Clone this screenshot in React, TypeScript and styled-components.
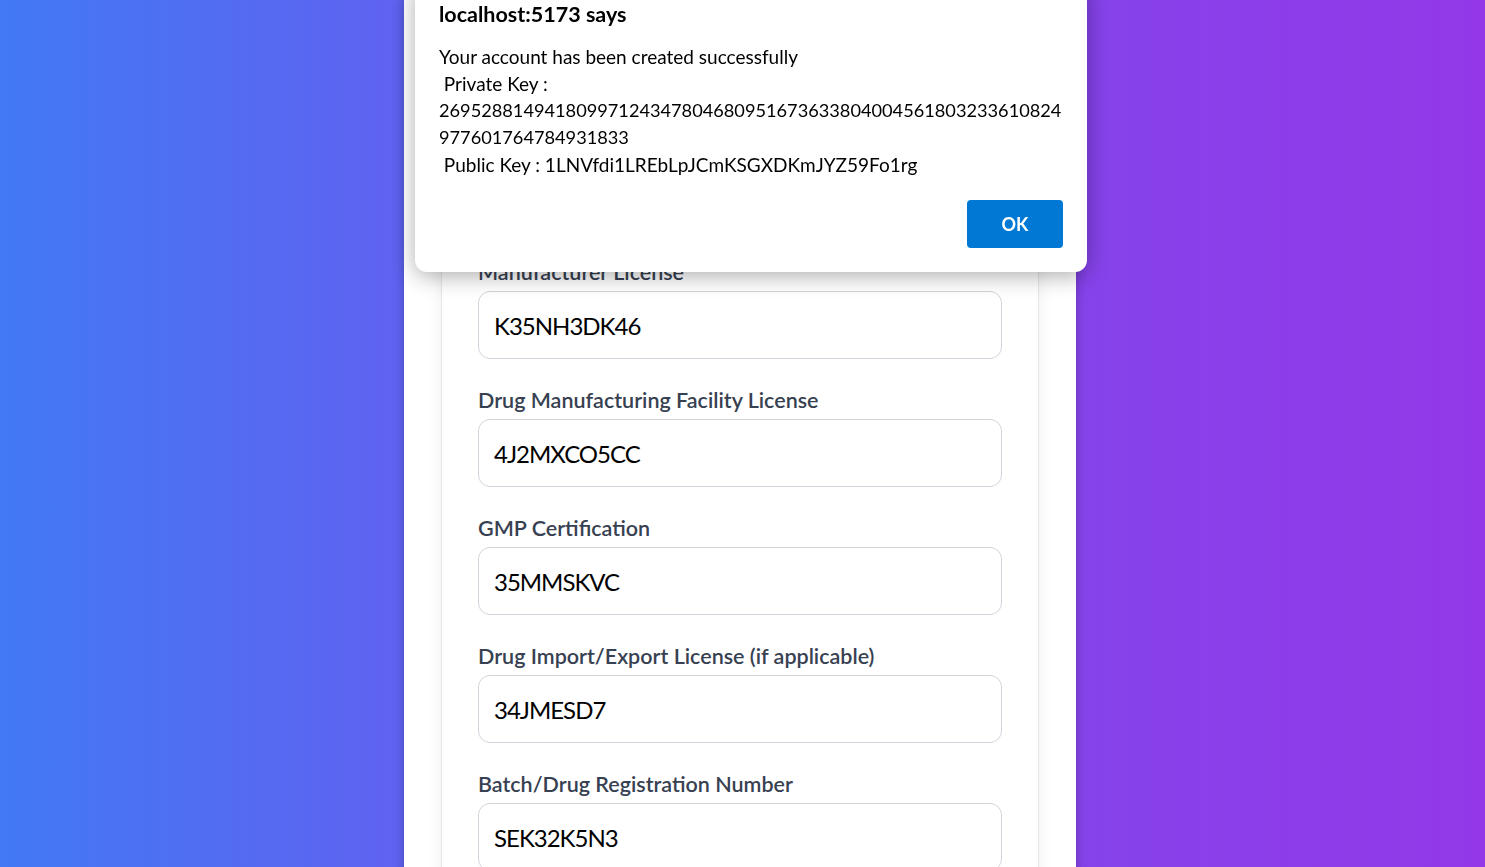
import React from "react";
import styled, { createGlobalStyle } from "styled-components";

const GlobalStyle = createGlobalStyle`
  html, body {
    margin: 0;
    padding: 0;
    height: 100%;
    overflow: hidden;
  }
  body {
    font-family: "Lato", "Noto Sans", "Liberation Sans", sans-serif;
  }
`;

const Page = styled.div`
  min-height: 100vh;
  display: flex;
  justify-content: center;
  padding-right: 5px;
  background: linear-gradient(90deg, #4279f4 0%, #7d4aec 55%, #9338e8 100%);
`;

const Panel = styled.div`
  width: 672px;
  min-height: 100vh;
  box-sizing: border-box;
  padding: 0 37px;
  background: #ffffff;
  box-shadow: 0 0 10px rgba(0, 0, 0, 0.25);
`;

const Card = styled.form`
  display: flex;
  flex-direction: column;
  gap: 24px;
  padding: 255px 36px 40px;
  border: 1px solid #e5e7eb;
  border-top: none;
  background: #ffffff;
  box-shadow: 0 4px 14px rgba(0, 0, 0, 0.07);
`;

const Field = styled.div`
  display: flex;
  flex-direction: column;
  gap: 5px;
`;

const Label = styled.label`
  padding-top: 3px;
  font-size: 21.5px;
  line-height: 28px;
  font-weight: 600;
  color: #374151;
`;

const Input = styled.input`
  height: 68px;
  box-sizing: border-box;
  padding: 0 15px;
  border: 1px solid #d1d5db;
  border-radius: 12px;
  background: #ffffff;
  font-family: inherit;
  font-size: 24px;
  letter-spacing: -1px;
  color: #000000;
  outline: none;
`;

const Alert = styled.div`
  position: fixed;
  top: -20px;
  left: 415px;
  width: 672px;
  box-sizing: border-box;
  padding: 20px 24px 23px;
  display: flex;
  flex-direction: column;
  background: #ffffff;
  border-radius: 12px;
  box-shadow: 0 4px 22px rgba(0, 0, 0, 0.32);
  color: #000000;
`;

const AlertTitle = styled.div`
  font-size: 21.5px;
  line-height: 28px;
  font-weight: 700;
`;

const AlertMessage = styled.div`
  margin-top: 15px;
`;

const MessageLine = styled.div<{ $digits?: boolean }>`
  font-size: ${(p) => (p.$digits ? "18.2px" : "19px")};
  line-height: 27px;
  white-space: pre;
`;

const AlertActions = styled.div`
  display: flex;
  justify-content: flex-end;
  margin-top: 22px;
`;

const OkButton = styled.button`
  width: 96px;
  height: 48px;
  margin-bottom: 1px;
  border: none;
  border-radius: 4px;
  background: #0078d4;
  color: #ffffff;
  font-family: inherit;
  font-size: 18px;
  font-weight: 700;
  cursor: pointer;
`;

const fields = [
  { label: "Manufacturer License", value: "K35NH3DK46" },
  { label: "Drug Manufacturing Facility License", value: "4J2MXCO5CC" },
  { label: "GMP Certification", value: "35MMSKVC" },
  { label: "Drug Import/Export License (if applicable)", value: "34JMESD7" },
  { label: "Batch/Drug Registration Number", value: "SEK32K5N3" },
];

const messageLines = [
  { text: "Your account has been created successfully" },
  { text: " Private Key :" },
  { text: "26952881494180997124347804680951673633804004561803233610824", digits: true },
  { text: "977601764784931833", digits: true },
  { text: " Public Key : 1LNVfdi1LREbLpJCmKSGXDKmJYZ59Fo1rg" },
];

const App = () => {
  return (
    <>
      <GlobalStyle />
      <Page>
        <Panel>
          <Card onSubmit={(e) => e.preventDefault()}>
            {fields.map((f) => (
              <Field key={f.label}>
                <Label>{f.label}</Label>
                <Input defaultValue={f.value} />
              </Field>
            ))}
          </Card>
        </Panel>
      </Page>
      <Alert role="alertdialog">
        <AlertTitle>localhost:5173 says</AlertTitle>
        <AlertMessage>
          {messageLines.map((l, i) => (
            <MessageLine key={i} $digits={l.digits}>
              {l.text}
            </MessageLine>
          ))}
        </AlertMessage>
        <AlertActions>
          <OkButton>OK</OkButton>
        </AlertActions>
      </Alert>
    </>
  );
};

export default App;
